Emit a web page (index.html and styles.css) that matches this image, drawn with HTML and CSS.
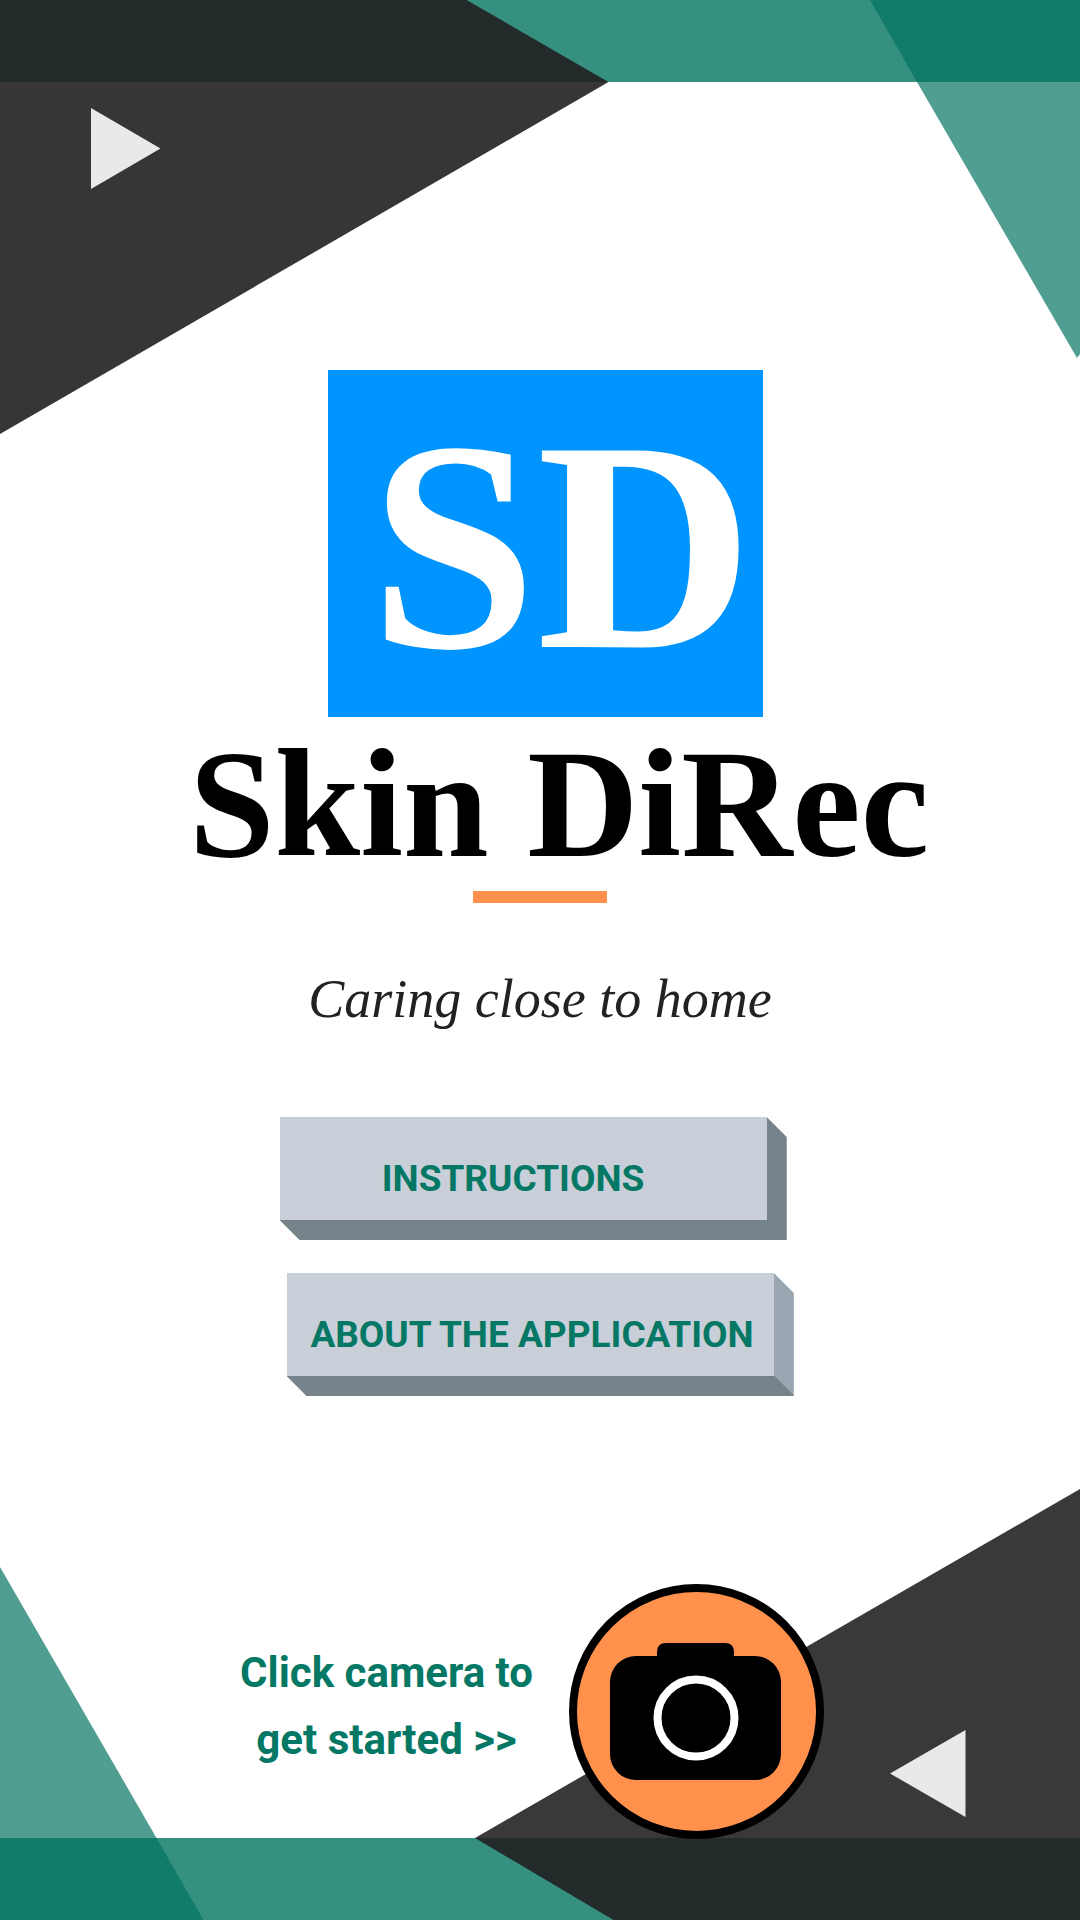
FILE: index.html
```html
<!DOCTYPE html>
<html lang="en">
<head>
  <meta charset="utf-8">
  <meta name="viewport" content="width=device-width, initial-scale=1">
  <title>Skin DiRec</title>
  <link rel="stylesheet" href="styles.css">
</head>
<body>
  <div class="page">
    <svg class="corner corner-top" viewBox="0 0 1080 434" aria-hidden="true">
      <path fill="#369080" d="M0 0H1080V82H0z"/>
      <path fill="#509e91" d="M917 82H1080V354L1077 358z"/>
      <path fill="#127c6b" d="M870 0H1080V82H917z"/>
      <path fill="#363636" d="M0 82H608.500L0 434z"/>
      <path fill="#222b2a" d="M0 0H466.500L608.500 82H0z"/>
      <path fill="#e9e9e9" d="M91 108L160.500 148.500L91 189z"/>
    </svg>
    <svg class="corner corner-bottom" viewBox="0 0 1080 431" aria-hidden="true">
      <path fill="#369080" d="M0 349H1080V431H0z"/>
      <path fill="#509e91" d="M0 78L156.500 349H0z"/>
      <path fill="#127c6b" d="M0 349H156.500L203.500 431H0z"/>
      <path fill="#393939" d="M1080 0V349H475z"/>
      <path fill="#222b2a" d="M475 349H1080V431H613.500z"/>
      <path fill="#e9e9e9" d="M890 284.500L965.500 241V328z"/>
    </svg>

    <main class="content">
      <div class="logo" aria-hidden="true">SD</div>
      <h1 class="name">Skin DiRec</h1>
      <hr class="rule">
      <p class="tagline">Caring close to home</p>

      <nav class="menu">
        <button class="block block-first" type="button">INSTRUCTIONS</button>
        <button class="block block-second" type="button">ABOUT THE APPLICATION</button>
      </nav>

      <div class="start">
        <label class="start-text" for="camera">Click camera to<br>get started &gt;&gt;</label>
        <button class="camera" id="camera" type="button">
          <svg class="camera-icon" viewBox="0 0 255 255" aria-hidden="true">
            <circle cx="127.500" cy="127.500" r="123.500" fill="#ff914d" stroke="#000" stroke-width="8"/>
            <path d="M88 72V68Q88 59 97 59H156Q165 59 165 68V72H186A26 26 0 0 1 212 98V170A26 26 0 0 1 186 196H67A26 26 0 0 1 41 170V98A26 26 0 0 1 67 72z"/>
            <circle cx="127" cy="134" r="38.500" fill="none" stroke="#fff" stroke-width="8"/>
          </svg>
        </button>
      </div>
    </main>
  </div>
</body>
</html>
```
FILE: styles.css
```css
* {
  box-sizing: border-box;
}

body {
  margin: 0;
  background: #fff;
  color: #222;
}

.page {
  position: relative;
  display: flex;
  min-height: 100vh;
  overflow: hidden;
}

.corner {
  position: absolute;
  left: 0;
  width: 100%;
  height: auto;
}

.corner-top {
  top: 0;
}

.corner-bottom {
  bottom: 0;
}

.content {
  position: relative;
  flex: 1;
  display: flex;
  flex-direction: column;
  align-items: center;
  padding: 370px 0 81px;
}

.logo {
  width: 435px;
  height: 347px;
  margin-left: 11px;
  padding-left: 32px;
  background: #0094ff;
  color: #fff;
  font: bold 300px/352px "Liberation Serif", serif;
  text-align: center;
  white-space: nowrap;
}

.name {
  margin: 0;
  padding-left: 38px;
  color: #000;
  font: bold 154px/174px "Liberation Serif", serif;
  white-space: nowrap;
}

.rule {
  width: 134px;
  height: 12px;
  margin: 0;
  border: 0;
  background: #ff914d;
}

.tagline {
  margin: 64px 0 0;
  font: italic 54px/64px "Liberation Serif", cursive;
}

.menu {
  display: flex;
  flex-direction: column;
  gap: 33px;
  width: 514px;
  margin: 86px 7px 0 0;
}

.block {
  width: 507px;
  height: 123px;
  padding: 20px 20px 20px 0;
  border: 0;
  background:
    linear-gradient(#c8cfd9, #c8cfd9) 0 0 / calc(100% - 20px) calc(100% - 20px) no-repeat,
    linear-gradient(to top right, #77838b 50%, var(--side) 50%) 100% 100% / 20px 20px no-repeat,
    linear-gradient(var(--side), var(--side)) 100% 0 / 20px calc(100% - 20px) no-repeat,
    #77838b;
  clip-path: polygon(0 0, calc(100% - 20px) 0, 100% 20px, 100% 100%, 20px 100%, 0 calc(100% - 20px));
  color: #047864;
  font: bold 37px/48px Roboto, sans-serif;
  white-space: nowrap;
  cursor: pointer;
}

.block-first {
  --side: #77838b;
  padding-right: 40px;
}

.block-second {
  --side: #9aa6b2;
  align-self: flex-end;
  padding-right: 16px;
}

.start {
  display: flex;
  align-items: center;
  gap: 36px;
  margin: auto 16px 0 0;
}

.start-text {
  padding-bottom: 12px;
  color: #047864;
  font: bold 42px/67px Roboto, sans-serif;
  text-align: center;
  white-space: nowrap;
  cursor: pointer;
}

.camera {
  width: 255px;
  height: 255px;
  padding: 0;
  border: 0;
  border-radius: 50%;
  background: none;
  cursor: pointer;
}

.camera-icon {
  display: block;
  width: 100%;
}
```
